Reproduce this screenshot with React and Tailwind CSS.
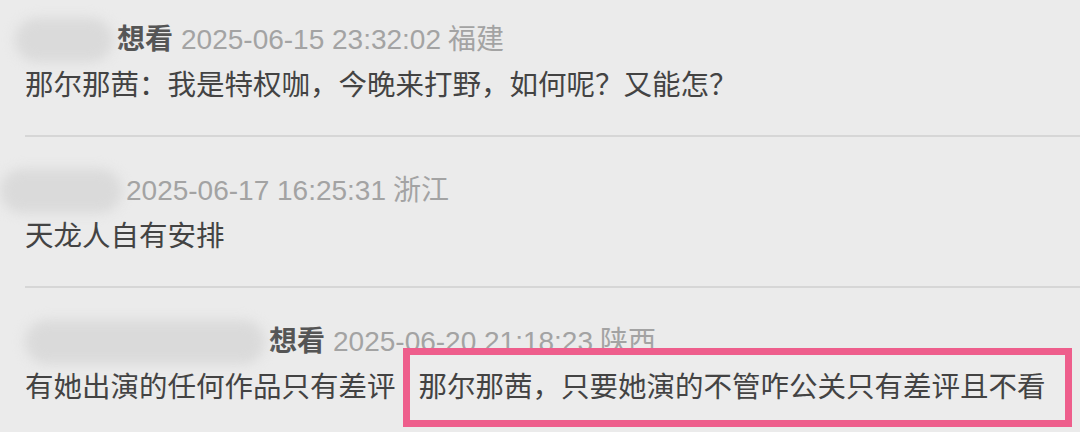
import React from 'react';

const comments = [
  {
    blur: 'w-[98px] ml-[-10px]',
    want: true,
    time: '2025-06-15 23:32:02',
    place: '福建',
    text: '那尔那茜：我是特权咖，今晚来打野，如何呢？又能怎？',
    pad: 'pt-[20px]',
  },
  {
    blur: 'w-[122px] ml-[-25px]',
    want: false,
    time: '2025-06-17 16:25:31',
    place: '浙江',
    text: '天龙人自有安排',
    pad: 'pt-[34px]',
  },
  {
    blur: 'w-[240px]',
    want: true,
    time: '2025-06-20 21:18:23',
    place: '陕西',
    text: '有她出演的任何作品只有差评',
    boxed: '那尔那茜，只要她演的不管咋公关只有差评且不看',
    pad: 'pt-[34px]',
  },
];

function Comment({ c, last }) {
  return (
    <div className={`${c.pad} ${last ? '' : 'pb-[25px] border-b-2 border-[#d6d6d6]'}`}>
      <div className="flex items-center h-[40px] text-[28px] leading-none">
        <div className={`${c.blur} h-[44px] bg-[#dadada] blur-[6px] rounded-full mr-[4px]`} />
        {c.want && <span className="text-[#555] font-semibold mr-[8px]">想看</span>}
        <span className="text-[#a3a3a3]">{c.time}</span>
        <span className="text-[#a3a3a3] ml-[7px]">{c.place}</span>
      </div>
      <div className="flex items-center h-[50px] text-[28.5px] text-[#434343] leading-none">
        <span>{c.text}</span>
        {c.boxed && (
          <div className="ml-[7px] w-[669px] h-[79px] border-[7px] border-[#ee5e8c] flex items-center pl-[9px] bg-[#ececec]">
            {c.boxed}
          </div>
        )}
      </div>
    </div>
  );
}

export default function App() {
  return (
    <div
      className="w-[1080px] h-[432px] overflow-hidden bg-[#ebebeb] pl-[25px]"
      style={{ fontFamily: '"Liberation Sans", "Noto Sans CJK SC", sans-serif' }}
    >
      {comments.map((c, i) => (
        <Comment key={i} c={c} last={i === comments.length - 1} />
      ))}
    </div>
  );
}
